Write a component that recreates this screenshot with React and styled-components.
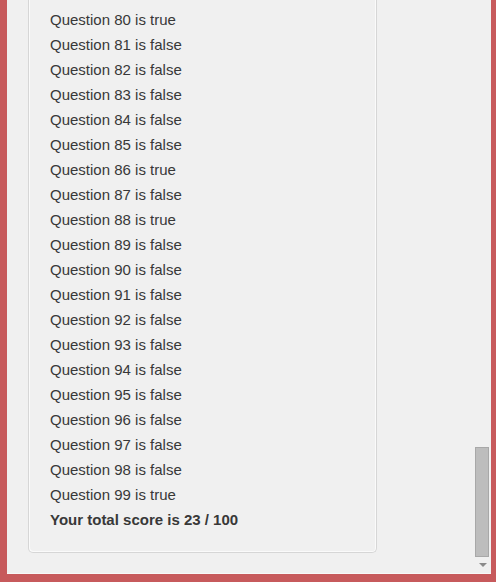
import React from 'react'
import styled, { createGlobalStyle } from 'styled-components'

const results = [
  true, false, false, false, false, false, true, false, true, false,
  false, false, false, false, false, false, false, false, false, true,
]

const App = () => {
  return (
    <>
      <GlobalStyle />
      <Frame>
        <Viewport>
          <Content>
            <Well>
              {results.map((ok, i) => (
                <Line key={i}>Question {80 + i} is {ok ? 'true' : 'false'}</Line>
              ))}
              <Line bold>Your total score is 23 / 100</Line>
            </Well>
          </Content>
          <Scrollbar>
            <Track>
              <Thumb />
            </Track>
            <Arrow />
          </Scrollbar>
        </Viewport>
      </Frame>
    </>
  )
}

export default App

const GlobalStyle = createGlobalStyle`
  html, body {
    margin: 0;
    padding: 0;
    background: #f0f0f0;
  }
`

const Frame = styled.div`
  box-sizing: border-box;
  width: 496px;
  height: 582px;
  display: flex;
  flex-direction: column;
  border-left: 7px solid #c75a5c;
  border-right: 5px solid #c75a5c;
  border-bottom: 8px solid #c75a5c;
  background: #f0f0f0;
  font-family: "Liberation Sans", Arial, sans-serif;
`

const Viewport = styled.div`
  flex: 1;
  display: flex;
  min-height: 0;
  border-bottom: 1px solid #f8f8f8;
`

const Content = styled.div`
  flex: 1;
  padding-left: 21px;
`

const Well = styled.div`
  width: 349px;
  box-sizing: border-box;
  padding: 7px 21px 20px;
  border: 1px solid #d6d6d6;
  border-top: none;
  border-radius: 0 0 5px 5px;
  box-shadow: inset 1px -1px 0 #fafafa, inset -1px 0 0 #fafafa;
  background: #f0f0f0;
`

const Line = styled.div`
  font-size: 15px;
  line-height: 25px;
  color: #383838;
  font-weight: ${p => (p.bold ? 700 : 400)};
`

const Scrollbar = styled.div`
  width: 17px;
  display: flex;
  flex-direction: column;
  background: #f0f0f0;
`

const Track = styled.div`
  flex: 1;
  display: flex;
  flex-direction: column;
  justify-content: flex-end;
  padding: 0 2px 0 1px;
`

const Thumb = styled.div`
  height: 110px;
  box-sizing: border-box;
  background: #bdbdbd;
  border: 1px solid #a8a8a8;
`

const Arrow = styled.div`
  height: 16px;
  display: flex;
  align-items: center;
  justify-content: center;
  &::before {
    content: '';
    border-left: 4px solid transparent;
    border-right: 4px solid transparent;
    border-top: 4px solid #8a8a8a;
  }
`
